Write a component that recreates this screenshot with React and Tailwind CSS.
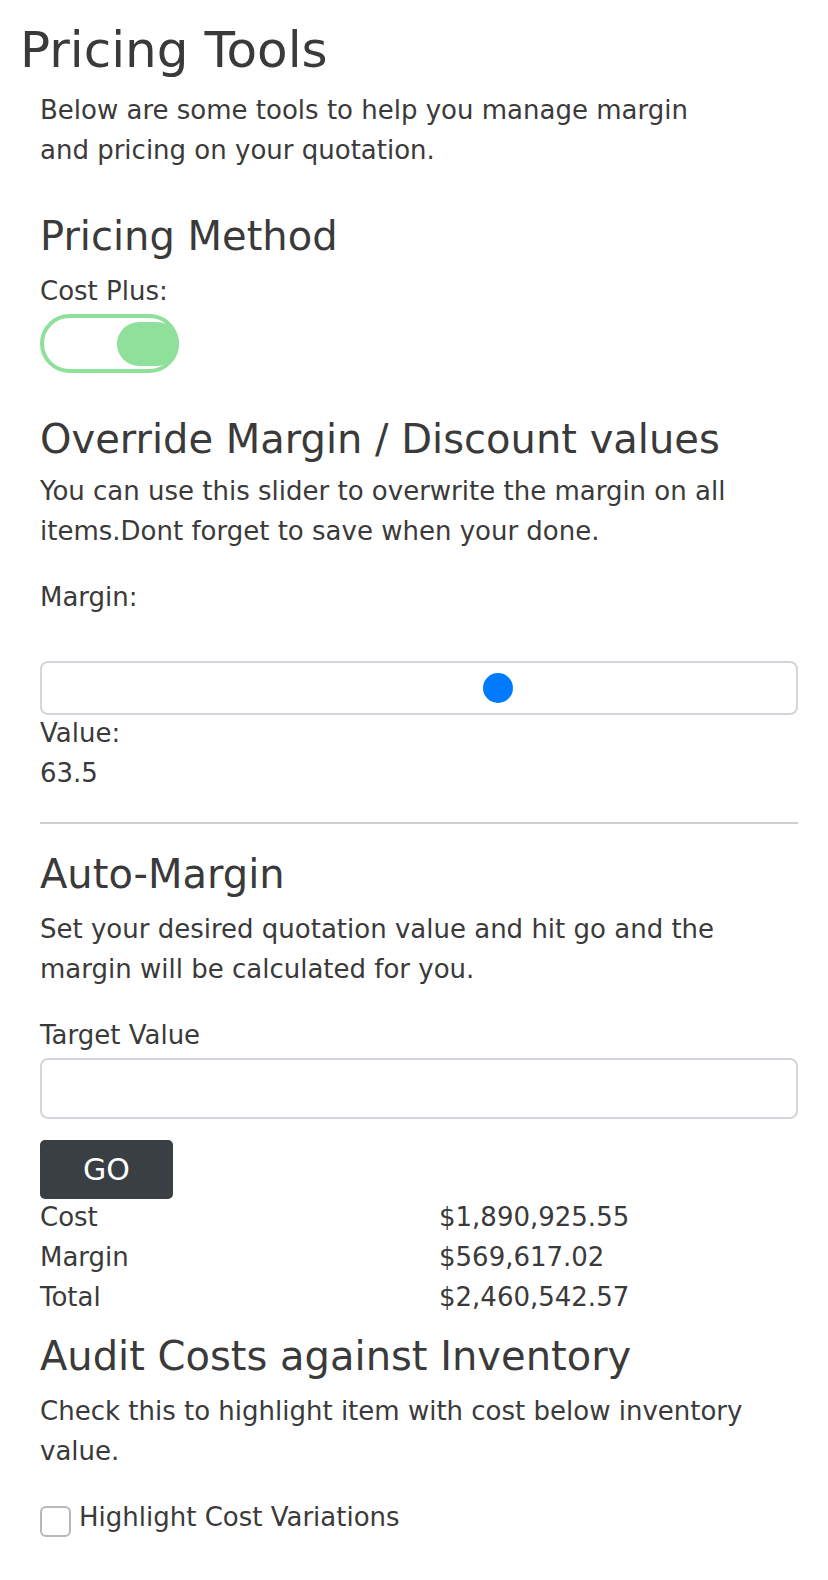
import React from 'react';

function App() {
  return (
    <div className="min-h-[1580px] bg-white px-5 pt-5 text-[#3a3a3a] font-['DejaVu_Sans',sans-serif]">
      <h1 className="text-[50px] leading-[60px]">Pricing Tools</h1>

      <div className="ml-5 w-[758px]">
        <p className="mt-[10px] w-[700px] text-[26px] leading-[40px]">
          Below are some tools to help you manage margin and pricing on your quotation.
        </p>

        {/* pricing method */}
        <h3 className="mt-[42px] text-[40px] leading-[48px]">Pricing Method</h3>
        <label className="mt-[11px] block text-[26px] leading-[40px]">Cost Plus:</label>
        <div className="mt-[3px] flex h-[59px] w-[139px] items-center rounded-full border-4 border-[#8fe09a]">
          <div className="ml-auto mr-[-4px] h-[44px] w-[62px] rounded-full bg-[#8fe09a]" />
        </div>

        {/* override */}
        <h3 className="mt-[42px] text-[40px] leading-[48px]">Override Margin / Discount values</h3>
        <p className="mt-[8px] text-[26px] leading-[40px]">
          You can use this slider to overwrite the margin on all items.Dont forget to save when your done.
        </p>
        <label className="mt-[26px] block text-[26px] leading-[40px]">Margin:</label>
        <div className="mt-[44px] flex h-[54px] items-center rounded-lg border-2 border-[#d3d5da] pl-[441px]">
          <div className="h-[30px] w-[30px] rounded-full bg-[#007bff]" />
        </div>
        <div className="mt-[-2px] text-[26px] leading-[40px]">Value:</div>
        <div className="text-[26px] leading-[40px]">63.5</div>

        <hr className="mt-[29px] border-0 border-t-2 border-[#cfcfcf]" />

        {/* auto margin */}
        <h3 className="mt-[26px] text-[40px] leading-[48px]">Auto-Margin</h3>
        <p className="mt-[11px] text-[26px] leading-[40px]">
          Set your desired quotation value and hit go and the margin will be calculated for you.
        </p>
        <label className="mt-[26px] block text-[26px] leading-[40px]">Target Value</label>
        <input
          type="text"
          className="mt-[3px] block h-[61px] w-full rounded-lg border-2 border-[#d3d5da] px-3 text-[26px] outline-none"
        />
        <button className="mt-[21px] h-[59px] w-[133px] rounded-[5px] bg-[#3a3f44] text-[30px] text-white">
          GO
        </button>
        <div className="mt-[-2px] grid grid-cols-[399px_1fr] text-[26px] leading-[40px]">
          <div>Cost</div>
          <div>$1,890,925.55</div>
          <div>Margin</div>
          <div>$569,617.02</div>
          <div>Total</div>
          <div>$2,460,542.57</div>
        </div>

        {/* audit */}
        <h3 className="mt-[15px] text-[40px] leading-[48px]">Audit Costs against Inventory</h3>
        <p className="mt-[11px] text-[26px] leading-[40px]">
          Check this to highlight item with cost below inventory value.
        </p>
        <div className="mt-[26px] flex items-start gap-2">
          <span className="mt-[9px] h-[31px] w-[31px] shrink-0 rounded-[6px] border-2 border-[#b8b8b8]" />
          <span className="text-[26px] leading-[40px]">Highlight Cost Variations</span>
        </div>
      </div>
    </div>
  );
}

export default App;
